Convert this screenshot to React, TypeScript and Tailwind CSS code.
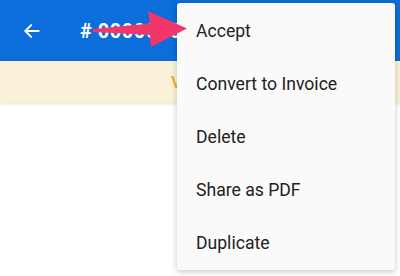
const MENU_ITEMS = ['Accept', 'Convert to Invoice', 'Delete', 'Share as PDF', 'Duplicate']

export default function App() {
  return (
    <div className="relative w-[400px] h-[276px] overflow-hidden bg-white font-['Roboto',sans-serif]">
      {/* App bar */}
      <div className="h-[61px] bg-[#0b6edb] flex items-center">
        <div className="w-[62px] flex items-center justify-center pl-[1px]">
          <svg width="20" height="20" viewBox="0 0 24 24" fill="none" stroke="white" strokeWidth="2.4" strokeLinecap="round" strokeLinejoin="round">
            <path d="M20 12H4.5" />
            <path d="M11 5l-7 7 7 7" />
          </svg>
        </div>
        <span className="ml-[18px] text-white text-[20px] font-bold tracking-wide">#&nbsp;000000012</span>
      </div>

      {/* Status banner */}
      <div className="h-[42px] bg-[#faf1d8] flex items-center pl-[171px] shadow-[0_1px_3px_rgba(0,0,0,0.12)]">
        <span className="text-[#e3b12b] text-[17px] font-medium pt-[2px]">Viewed</span>
      </div>

      {/* Overflow menu */}
      <div className="absolute left-[177px] top-[3px] w-[218px] bg-[#fafafa] rounded-[3px] pt-[1px] pb-[1px] shadow-[0_2px_6px_rgba(0,0,0,0.22)]">
        {MENU_ITEMS.map(item => (
          <div key={item} className="h-[53px] flex items-center pl-[19px] pt-[2px] text-[17.6px] text-[#222222]">
            {item}
          </div>
        ))}
      </div>

      {/* Callout arrow */}
      <svg className="absolute left-0 top-0" width="400" height="276" viewBox="0 0 400 276">
        <path d="M93 29 L150 23.5 L148 11 L187 28.5 L151 47 L150 35 L93 32 Z" fill="#f23669" />
      </svg>
    </div>
  )
}
